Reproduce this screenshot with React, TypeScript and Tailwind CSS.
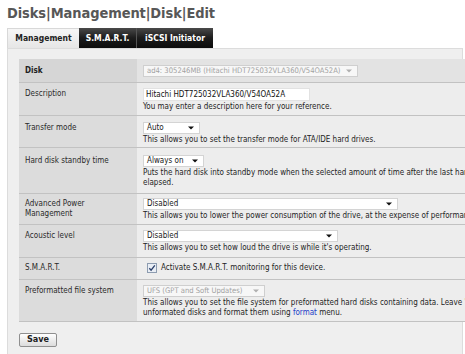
import React from "react";

function Arrow({ muted }: { muted?: boolean }) {
    return (
        <svg width="6" height="4" viewBox="0 0 6 4" className="shrink-0">
            <path d="M0 0.5 L6 0.5 L3 3.5 Z" fill={muted ? "#b0b0b0" : "#111"} />
        </svg>
    );
}

function Select({ text, className, muted }: { text: string; className: string; muted?: boolean }) {
    return (
        <div
            className={
                "flex items-center justify-between h-[12px] pl-[3px] pr-[5px] border leading-none " +
                (muted ? "bg-[#f7f7f7] border-[#cfcfcf] text-[#a2a2a2] text-[7.6px] " : "bg-white border-[#d4d4d4] text-[#1a1a1a] ") +
                className
            }
        >
            <span className="whitespace-nowrap">{text}</span>
            <Arrow muted={muted} />
        </div>
    );
}

function Row({
    label,
    height,
    pt,
    dark,
    children,
}: {
    label: React.ReactNode;
    height: string;
    pt: string;
    dark?: boolean;
    children: React.ReactNode;
}) {
    return (
        <div className={"grid grid-cols-[118px_1fr] border-b border-[#c2c2c2] " + height}>
            <div className={"pl-[6px] leading-[12px] " + pt + (dark ? " bg-[#d6d6d6] font-bold text-[#222]" : " bg-[#dcdcdc] text-[#2a2a2a]")}>
                {label}
            </div>
            <div className={"pl-[6px] " + pt + (dark ? " bg-[#e3e3e3]" : " bg-[#ededed]")}>{children}</div>
        </div>
    );
}

function Help({ children }: { children: React.ReactNode }) {
    return <p className="mt-[1px] leading-[10px] whitespace-nowrap text-[#1e1e1e]">{children}</p>;
}

export default function App() {
    return (
        <div className="w-[465px] h-[354px] overflow-hidden bg-white font-['DejaVu_Sans_Condensed','Liberation_Sans',sans-serif] text-[8px]">
            <h1 className="pl-[7px] pt-[3px] h-[28px] text-[14.5px] font-bold text-[#575757] tracking-[-0.1px]">
                Disks|Management|Disk|Edit
            </h1>

            <div className="flex ml-[7px] h-[20px] text-[8.5px] font-bold">
                <div className="w-[72px] flex items-center justify-center bg-gradient-to-b from-[#f6f6f6] to-[#e6e6e6] text-[#222] border-t border-l border-[#d8d8d8]">
                    Management
                </div>
                <div className="w-[58px] flex items-center justify-center bg-gradient-to-b from-[#4a4a4a] via-[#1c1c1c] to-[#0c0c0c] text-white border-r border-[#555]">
                    S.M.A.R.T.
                </div>
                <div className="w-[76px] flex items-center justify-center bg-gradient-to-b from-[#4a4a4a] via-[#1c1c1c] to-[#0c0c0c] text-white">
                    iSCSI Initiator
                </div>
            </div>

            <div className="ml-[7px] w-[456px] h-[320px] bg-[#efefef] border-l border-r border-t border-[#dcdcdc] pl-[11px] pt-[10px]">
                <div className="w-[460px]">
                    <Row label="Disk" height="h-[24px]" pt="pt-[6px]" dark>
                        <Select muted text="ad4: 305246MB (Hitachi HDT725032VLA360/V54OA52A)" className="w-[215px]" />
                    </Row>

                    <Row label="Description" height="h-[33px]" pt="pt-[5px]">
                        <div className="h-[13px] w-[167px] bg-white border border-[#e2e2e2] pl-[2px] leading-[12px] text-[#111] whitespace-nowrap">
                            Hitachi HDT725032VLA360/V54OA52A
                        </div>
                        <Help>You may enter a description here for your reference.</Help>
                    </Row>

                    <Row label="Transfer mode" height="h-[32px]" pt="pt-[6px]">
                        <Select text="Auto" className="w-[57px]" />
                        <Help>This allows you to set the transfer mode for ATA/IDE hard drives.</Help>
                    </Row>

                    <Row label="Hard disk standby time" height="h-[46px]" pt="pt-[7px]">
                        <Select text="Always on" className="w-[61px]" />
                        <Help>
                            Puts the hard disk into standby mode when the selected amount of time after the last hard disk access has been
                            <br />
                            elapsed.
                        </Help>
                    </Row>

                    <Row
                        label={
                            <span className="block leading-[10px] pt-[1px]">
                                Advanced Power
                                <br />
                                Management
                            </span>
                        }
                        height="h-[31px]"
                        pt="pt-[4px]"
                    >
                        <Select text="Disabled" className="w-[255px]" />
                        <Help>This allows you to lower the power consumption of the drive, at the expense of performance.</Help>
                    </Row>

                    <Row label="Acoustic level" height="h-[33px]" pt="pt-[5px]">
                        <Select text="Disabled" className="w-[195px]" />
                        <Help>This allows you to set how loud the drive is while it's operating.</Help>
                    </Row>

                    <Row label="S.M.A.R.T." height="h-[22px]" pt="pt-[4px]">
                        <div className="flex items-center gap-[4px] h-[12px] pl-[4px]">
                            <svg width="10" height="10" viewBox="0 0 10 10">
                                <rect x="0.5" y="0.5" width="9" height="9" fill="#e9eef5" stroke="#8d9cb0" />
                                <path d="M2.3 5.2 L4.1 7.2 L7.8 2.4" fill="none" stroke="#2a3f6a" strokeWidth="1.3" />
                            </svg>
                            <span className="whitespace-nowrap text-[#1e1e1e]">Activate S.M.A.R.T. monitoring for this device.</span>
                        </div>
                    </Row>

                    <Row label="Preformatted file system" height="h-[42px]" pt="pt-[5px]">
                        <Select muted text="UFS (GPT and Soft Updates)" className="w-[122px]" />
                        <Help>
                            This allows you to set the file system for preformatted hard disks containing data. Leave 'UFS' for
                            <br />
                            unformated disks and format them using <span className="text-[#2440c8]">format</span> menu.
                        </Help>
                    </Row>
                </div>

                <button className="mt-[11px] w-[38px] h-[14px] flex items-center justify-center border border-[#8f8f8f] rounded-[2px] bg-gradient-to-b from-white to-[#dcdcdc] font-bold text-[9px] text-[#222]">
                    Save
                </button>
            </div>
        </div>
    );
}
